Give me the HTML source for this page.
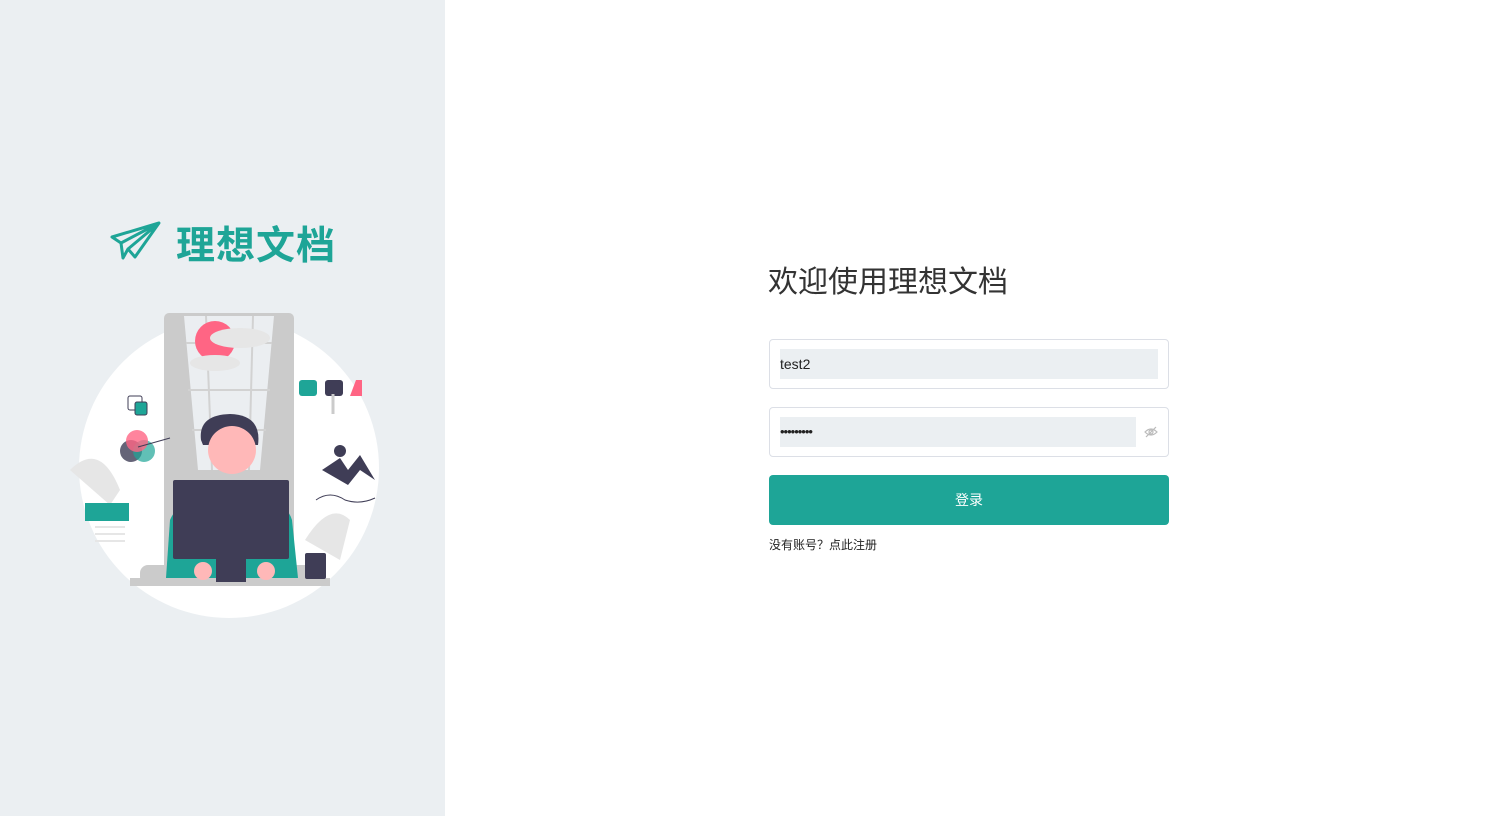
<!DOCTYPE html>
<html><head><meta charset="utf-8"><style>
*{margin:0;padding:0;box-sizing:border-box}
body{width:1489px;height:816px;overflow:hidden;background:#fff;font-family:"Liberation Sans","Noto Sans CJK SC",sans-serif;position:relative}
.left{position:absolute;left:0;top:0;width:445px;height:816px;background:#ebeff2}
.logo{position:absolute;left:176px;top:223px;font-size:39px;font-weight:bold;color:#1ea597;letter-spacing:1px;line-height:48px}
h1{position:absolute;left:768px;top:264px;font-size:30px;font-weight:normal;color:#333;line-height:38px}
.box{position:absolute;left:769px;width:400px;height:50px;border:1px solid #dcdfe6;border-radius:4px;background:#fff}
.inner{position:absolute;left:10px;top:9px;height:30px;background:#ebeff2;font-size:14px;color:#222;line-height:30px;padding-left:0}
.btn{position:absolute;left:769px;top:475px;width:400px;height:50px;background:#1ea597;border-radius:4px;color:#fff;font-size:14px;text-align:center;line-height:50px}
.link{position:absolute;left:769px;top:537px;font-size:12px;color:#222;line-height:16px}
</style></head><body>
<div class="left">
<svg width="445" height="816" style="position:absolute;left:0;top:0">
<g fill="none" stroke="#1ea597" stroke-width="3" stroke-linejoin="round">
<path d="M112 237 L159 223 L135 257 L128 249 L123 258 L121 243 Z M121 243 L159 223 M128 249 L159 223"/>
</g>
<circle cx="229" cy="468" r="150" fill="#fff"/>
<rect x="164" y="313" width="130" height="270" rx="5" fill="#cbcbcb"/>
<polygon points="184,316 274,316 260,470 198,470" fill="#ebeef1"/>
<g stroke="#d2d2d2" stroke-width="2"><line x1="206" y1="316" x2="212" y2="470"/><line x1="253" y1="316" x2="249" y2="470"/><line x1="186" y1="343" x2="272" y2="343"/><line x1="188" y1="390" x2="270" y2="390"/><line x1="192" y1="430" x2="266" y2="430"/></g>
<circle cx="215" cy="341" r="20" fill="#ff6584"/>
<ellipse cx="240" cy="338" rx="30" ry="10" fill="#e6e6e6"/>
<ellipse cx="215" cy="363" rx="25" ry="8" fill="#e6e6e6"/>
<path d="M70 470 Q100 440 120 490 L110 505 Z" fill="#e6e6e6"/>
<path d="M305 540 Q330 500 350 520 L340 560 Z" fill="#e6e6e6"/>
<rect x="85" y="503" width="44" height="18" fill="#1ea597"/>
<g stroke="#e6e6e6" stroke-width="2"><line x1="95" y1="527" x2="125" y2="527"/><line x1="95" y1="534" x2="125" y2="534"/><line x1="95" y1="541" x2="125" y2="541"/></g>
<rect x="128" y="396" width="14" height="14" rx="2" fill="none" stroke="#3f3d56"/><rect x="135" y="402" width="12" height="13" rx="2" fill="#1ea597" stroke="#3f3d56"/>
<circle cx="131" cy="451" r="11" fill="#3f3d56" opacity=".8"/><circle cx="144" cy="451" r="11" fill="#1ea597" opacity=".7"/><circle cx="137" cy="441" r="11" fill="#ff6584" opacity=".8"/>
<line x1="138" y1="447" x2="170" y2="438" stroke="#3f3d56"/>
<rect x="299" y="380" width="18" height="16" rx="3" fill="#1ea597"/><rect x="325" y="380" width="18" height="16" rx="3" fill="#3f3d56"/><path d="M350 396 L356 380 L362 380 L362 396Z" fill="#ff6584"/>
<path d="M333 394 L333 414" stroke="#cbcbcb" stroke-width="3"/>
<circle cx="340" cy="451" r="6" fill="#3f3d56"/>
<path d="M322 470 L340 458 L348 470 L360 455 L375 480 L360 470 L348 485Z" fill="#3f3d56"/>
<path d="M316 500 Q330 490 345 500 Q360 505 375 498" fill="none" stroke="#3f3d56"/>
<rect x="140" y="565" width="175" height="20" rx="8" fill="#cbcbcb"/>
<rect x="130" y="578" width="200" height="8" fill="#cbcbcb"/>
<path d="M166 578 L170 520 Q180 495 230 495 Q285 495 292 520 L298 578Z" fill="#1ea597"/>
<path d="M201 440 Q198 415 230 414 Q262 415 258 445 L203 445Z" fill="#3f3d56"/>
<circle cx="232" cy="450" r="24" fill="#ffb8b8"/>
<rect x="173" y="480" width="116" height="79" rx="2" fill="#3f3d56"/>
<rect x="216" y="558" width="30" height="24" fill="#3f3d56"/>
<circle cx="203" cy="571" r="9" fill="#ffb8b8"/><circle cx="266" cy="571" r="9" fill="#ffb8b8"/>
<rect x="305" y="553" width="21" height="26" rx="2" fill="#3f3d56"/>
</svg>
<div class="logo">理想文档</div>
</div>
<h1>欢迎使用理想文档</h1>
<div class="box" style="top:339px"><div class="inner" style="width:378px">test2</div></div>
<div class="box" style="top:407px"><div class="inner" style="width:356px;font-size:13px;letter-spacing:-1px">•••••••••</div>
<svg width="14" height="12" style="position:absolute;left:374px;top:18px" fill="none" stroke="#bbb" stroke-width="1.2"><path d="M1 6 Q7 0 13 6 Q7 12 1 6Z"/><circle cx="7" cy="6" r="2"/><line x1="2" y1="11" x2="12" y2="1"/></svg></div>
<div class="btn">登录</div>
<div class="link">没有账号？点此注册</div>
</body></html>
